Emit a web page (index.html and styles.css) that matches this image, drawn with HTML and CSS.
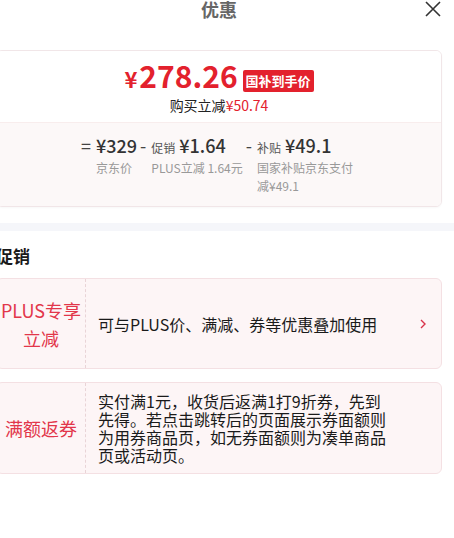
FILE: index.html
```html
<!DOCTYPE html>
<html>

	<head>
		<meta charset="UTF-8">
		<title>优惠</title>
		<link rel="stylesheet" href="styles.css">
	</head>

	<body>
		<div class="sheet">
			<div class="sheet-head">
				<h2 class="sheet-title">优惠</h2>
				<span class="close">
					<svg width="16" height="16" viewBox="0 0 16 16">
						<path d="M1 1L15 15M15 1L1 15" stroke="#333" stroke-width="1.6" fill="none" />
					</svg>
				</span>
			</div>

			<div class="price-card">
				<div class="price-top">
					<div class="price-line">
						<span class="price"><i>¥</i>278.26</span>
						<span class="tag">国补到手价</span>
					</div>
					<div class="save">购买立减<em>¥50.74</em></div>
				</div>

				<div class="price-calc">
					<div class="calc-item">
						<span class="op">=</span>
						<div class="calc-col">
							<div class="calc-val">¥329</div>
							<div class="calc-label">京东价</div>
						</div>
					</div>
					<div class="calc-item">
						<span class="op">-</span>
						<div class="calc-col">
							<div class="calc-val"><small>促销</small>¥1.64</div>
							<div class="calc-label">PLUS立减 1.64元</div>
						</div>
					</div>
					<div class="calc-item">
						<span class="op">-</span>
						<div class="calc-col">
							<div class="calc-val"><small>补贴</small>¥49.1</div>
							<div class="calc-label">国家补贴京东支付减¥49.1</div>
						</div>
					</div>
				</div>
			</div>

			<div class="band"></div>

			<h3 class="promo-title">促销</h3>

			<div class="promo">
				<div class="promo-name">PLUS专享<br>立减</div>
				<div class="promo-body">
					<p class="promo-text">可与PLUS价、满减、券等优惠叠加使用</p>
					<span class="promo-arrow">
						<svg width="6" height="10" viewBox="0 0 6 10">
							<path d="M1 1L5 5L1 9" stroke="#d9334b" stroke-width="1.4" fill="none" />
						</svg>
					</span>
				</div>
			</div>

			<div class="promo">
				<div class="promo-name">满额返券</div>
				<div class="promo-body">
					<p class="promo-text">实付满1元，收货后返满1打9折券，先到先得。若点击跳转后的页面展示券面额则为用券商品页，如无券面额则为凑单商品页或活动页。</p>
				</div>
			</div>
		</div>
	</body>

</html>
```

FILE: styles.css
```css
* {
	margin: 0;
	padding: 0;
	border: 0;
	box-sizing: border-box;
}

body {
	background: #fff;
	font-family: "Noto Sans CJK SC", "Noto Sans", sans-serif;
	color: #1a1a1a;
	overflow: hidden;
}

.sheet {
	width: 470px;
	margin-left: -16px;
	padding: 0 12px;
}

/* header */
.sheet-head {
	position: relative;
	height: 18px;
	text-align: center;
}

.sheet-title {
	font-size: 18px;
	line-height: 18px;
	font-weight: bold;
	color: #666;
}

.close {
	position: absolute;
	right: 1px;
	top: 1px;
	width: 16px;
	height: 16px;
}

.close svg {
	display: block;
}

/* price card */
.price-card {
	margin-top: 32px;
	border: 1px solid #f1e6e8;
	border-radius: 6px;
	overflow: hidden;
	box-shadow: 0 1px 2px rgba(0, 0, 0, 0.03);
}

.price-top {
	padding: 7px 0 7px;
	text-align: center;
	background: #fff;
}

.price-line {
	display: flex;
	justify-content: center;
	align-items: center;
	height: 34px;
}

.price {
	font-size: 30px;
	line-height: 34px;
	font-weight: bold;
	color: #e3212d;
}

.price i {
	font-style: normal;
	font-size: 22px;
	line-height: 22px;
	margin-right: 2px;
}

.tag {
	align-self: flex-end;
	margin-left: 5px;
	height: 22px;
	padding: 0 3px;
	background: #e3212d;
	color: #fff;
	font-size: 13px;
	line-height: 22px;
	font-weight: bold;
	border-radius: 2px;
}

.save {
	margin-top: 3px;
	font-size: 14px;
	line-height: 20px;
	color: #222;
}

.save em {
	font-style: normal;
	color: #e3212d;
}

.price-calc {
	display: flex;
	justify-content: center;
	gap: 3px;
	padding: 11px 0 11px;
	background: #fcf8f8;
	border-top: 1px solid #f8eded;
}

.calc-item {
	display: flex;
	gap: 5px;
}

.op {
	font-size: 18px;
	line-height: 22px;
	color: #444;
}

.calc-col {
	max-width: 100px;
}

.calc-val {
	height: 22px;
	font-size: 18px;
	line-height: 22px;
	font-weight: 500;
	color: #333;
	white-space: nowrap;
}

.calc-val small {
	font-size: 12px;
	line-height: 12px;
	font-weight: normal;
	color: #555;
	margin-right: 4px;
}

.calc-label {
	margin-top: 3px;
	font-size: 12px;
	line-height: 18px;
	color: #999;
}

.band {
	height: 8px;
	margin: 16px -12px 0;
	background: #f5f6fa;
}

.promo-title {
	margin-top: 13px;
	font-size: 17px;
	line-height: 24px;
	font-weight: bold;
	color: #1a1a1a;
}

/* promotion rows */
.promo {
	display: flex;
	min-height: 91px;
	margin-top: 10px;
	background: #fdf5f6;
	border: 1px solid #f4e0e3;
	border-radius: 6px;
}

.promo + .promo {
	margin-top: 13px;
}

.promo-name {
	display: flex;
	align-items: center;
	justify-content: center;
	flex: 0 0 89px;
	border-right: 1px dashed #e9d4d7;
	font-size: 18px;
	line-height: 28px;
	text-align: center;
	color: #e2364a;
}

.promo-body {
	display: flex;
	align-items: center;
	flex: 1;
	padding: 9px 0 9px 12px;
}

.promo-text {
	flex: 0 0 292px;
	font-size: 16px;
	line-height: 18px;
	color: #1a1a1a;
}

.promo-arrow {
	margin-left: auto;
	margin-right: 15px;
	width: 6px;
	height: 10px;
}

.promo-arrow svg {
	display: block;
}
```
